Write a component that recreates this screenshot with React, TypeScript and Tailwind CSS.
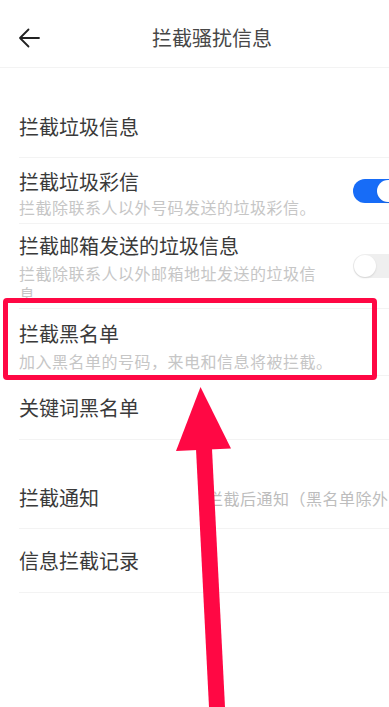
const font = { fontFamily: '"Noto Sans CJK SC", "Noto Sans", sans-serif' }

const Toggle = ({ on }: { on: boolean }) => (
  <div
    className={`ml-[34px] flex h-[24px] w-[47px] shrink-0 items-center rounded-full p-[1px] ${
      on ? 'justify-end bg-[#176cf7]' : 'justify-start bg-[#efefef]'
    }`}
  >
    <div className="h-[22px] w-[22px] rounded-full bg-white shadow-[0_1px_2px_rgba(0,0,0,0.12)]" />
  </div>
)

const Divider = () => <div className="ml-[19px] h-px bg-[#f3f3f3]" />

export default function App() {
  return (
    <div className="relative h-[707px] w-[389px] overflow-hidden bg-white" style={font}>
      {/* header */}
      <header className="flex h-[67px] items-center pt-[9px]">
        <svg
          className="ml-[18px] shrink-0"
          width="22"
          height="20"
          viewBox="0 0 22 20"
          fill="none"
          stroke="#222"
          strokeWidth="1.8"
          strokeLinecap="round"
          strokeLinejoin="round"
        >
          <path d="M21 10H2M10.5 1.5 2 10l8.5 8.5" />
        </svg>
        <h1 className="ml-[112px] text-[20px] font-normal leading-[26px] text-[#474747]">拦截骚扰信息</h1>
      </header>
      <div className="h-px bg-[#f3f3f3]" />

      <div className="h-[29px]" />

      {/* rows */}
      <div className="flex h-[60px] items-center px-[19px] text-[20px] text-[#3a3a3a]">拦截垃圾信息</div>
      <Divider />

      <div className="flex h-[65px] items-center pl-[19px]">
        <div className="w-[300px] shrink-0 pt-[5px]">
          <div className="text-[20px] leading-[26px] text-[#3a3a3a]">拦截垃圾彩信</div>
          <div className="mt-[1px] text-[16px] leading-[22px] tracking-[0.5px] text-[#c6c6c6]">
            拦截除联系人以外号码发送的垃圾彩信。
          </div>
        </div>
        <Toggle on />
      </div>
      <Divider />

      <div className="flex h-[84px] items-center pl-[19px]">
        <div className="w-[300px] shrink-0 pt-[6px]">
          <div className="text-[20px] leading-[26px] text-[#3a3a3a]">拦截邮箱发送的垃圾信息</div>
          <div className="mt-[4px] text-[16px] leading-[21px] tracking-[0.5px] text-[#c6c6c6]">
            拦截除联系人以外邮箱地址发送的垃圾信息
          </div>
        </div>
        <Toggle on={false} />
      </div>
      <Divider />

      <div className="h-[66px] pl-[19px] pt-[12px]">
        <div className="text-[20px] leading-[26px] text-[#3a3a3a]">拦截黑名单</div>
        <div className="mt-[3px] text-[16px] leading-[22px] tracking-[0.5px] text-[#c6c6c6]">
          加入黑名单的号码，来电和信息将被拦截。
        </div>
      </div>
      <Divider />

      <div className="flex h-[63px] items-center px-[19px] text-[20px] text-[#3a3a3a]">关键词黑名单</div>
      <Divider />

      <div className="h-[28px]" />

      <div className="flex h-[60px] items-center whitespace-nowrap pl-[19px]">
        <span className="text-[20px] text-[#3a3a3a]">拦截通知</span>
        <span className="ml-[108px] text-[16px] tracking-[0.5px] text-[#bdbdbd]">拦截后通知（黑名单除外）</span>
      </div>
      <Divider />

      <div className="flex h-[63px] items-center px-[19px] text-[20px] text-[#3a3a3a]">信息拦截记录</div>
      <Divider />

      {/* annotation overlay */}
      <div className="pointer-events-none absolute left-[3px] top-[298px] h-[82px] w-[374px] rounded-[4px] border-[5px] border-[#ff0844]" />
      <svg className="pointer-events-none absolute left-0 top-0" width="389" height="707" viewBox="0 0 389 707">
        <polygon points="200.5,387 176,451 231,448.5" fill="#ff0844" />
        <polygon points="196,449 212,449 225,707 209,707" fill="#ff0844" />
      </svg>
    </div>
  )
}
